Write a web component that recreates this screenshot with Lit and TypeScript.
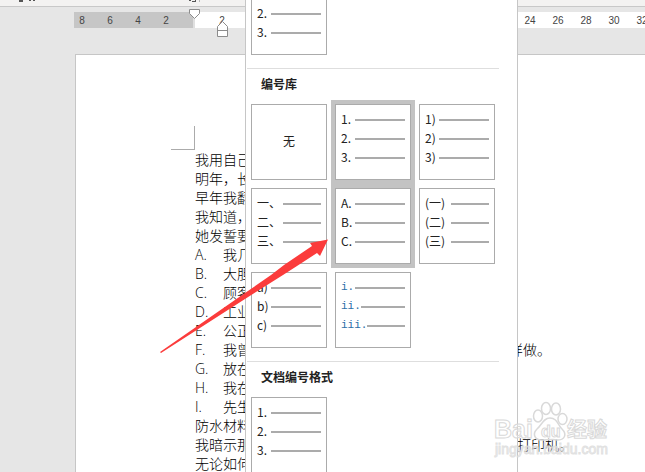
import { LitElement, html, css, nothing } from "lit";
import { customElement, property } from "lit/decorators.js";

interface Row { mark?: string; text: string; tail?: string; }
interface Choice { labels: string[]; sizes?: string[]; selected?: boolean; kind?: string; }

const rows: Row[] = [
  { text: "我用自己" },
  { text: "明年，长" },
  { text: "早年我翻" },
  { text: "我知道，" },
  { text: "她发誓要" },
  { mark: "A.", text: "我几" },
  { mark: "B.", text: "大胆" },
  { mark: "C.", text: "顾客" },
  { mark: "D.", text: "工业" },
  { mark: "E.", text: "公正" },
  { mark: "F.", text: "我曾", tail: "样做。" },
  { mark: "G.", text: "放在" },
  { mark: "H.", text: "我在" },
  { mark: "I.", text: "先生" },
  { text: "防水材料" },
  { text: "我暗示那", tail: "打印机。" },
  { text: "无论如何" },
];

const library: Choice[] = [
  { labels: [] },
  { labels: ["1.", "2.", "3."], selected: true },
  { labels: ["1)", "2)", "3)"] },
  { labels: ["一、", "二、", "三、"], sizes: ["l", "l", "l"] },
  { labels: ["A.", "B.", "C."], selected: true },
  { labels: ["(一)", "(二)", "(三)"], sizes: ["l", "l", "l"] },
  { labels: ["a)", "b)", "c)"] },
  { labels: ["i.", "ii.", "iii."], sizes: ["s", "m", "l"], kind: "roman" },
];
const digits: Choice = { labels: ["1.", "2.", "3."] };

@customElement("number-choice")
export class NumberChoice extends LitElement {
  @property({ attribute: false }) choice: Choice = digits;

  static styles = css`
    :host { display: block; }
    button {
      display: flex; flex-direction: column; box-sizing: border-box;
      width: 76px; height: 76px; padding: 5px 5px 0; margin: 0;
      border: 1px solid #ababab; border-radius: 0; background: #fff; color: #222;
      font: 12px/19px "Noto Sans CJK SC", sans-serif; text-align: left;
    }
    .selected { box-shadow: 0 0 0 4px #c3c3c3; }
    .none { align-items: center; justify-content: center; padding: 0 0 3px; }
    .line { display: flex; align-items: center; align-self: stretch; height: 19px; white-space: nowrap; }
    .label { flex: none; align-self: flex-start; width: 14px; line-height: 17px; }
    .m { width: 20px; }
    .l { width: 26px; }
    .roman { font-family: "Liberation Mono", monospace; font-size: 11px; color: #2d6fa8; }
    .roman .label { line-height: 19px; }
    .rule { flex: 1; height: 2px; background: #ababab; }
  `;

  render() {
    const { labels, sizes, selected, kind } = this.choice;
    if (!labels.length) return html`<button class="none">无</button>`;
    return html`<button class="${selected ? "selected" : ""} ${kind ?? ""}">
      ${labels.map((t, i) => html`<span class="line"><span class="label ${sizes?.[i] ?? ""}">${t}</span><span class="rule"></span></span>`)}
    </button>`;
  }
}

@customElement("app-root")
export class AppRoot extends LitElement {
  static styles = css`
    :host {
      display: block; position: relative; height: 100vh; overflow: hidden;
      background: #e6e6e6; color: #222;
      font: 14px/19px "Noto Sans CJK SC", sans-serif;
    }
    .ribbon { position: relative; height: 6px; background: #f3f2f1; border-bottom: 1px solid #c8c8c8; overflow: hidden; }
    .ribbon svg { display: block; }
    .ruler { display: flex; height: 16px; margin: 5px 0 0 74px; background: #fff; font: 10px/17px "Liberation Sans", sans-serif; color: #444; }
    .margin { display: flex; justify-content: flex-end; box-sizing: border-box; flex: none; width: 121px; padding-right: 13px; background: #c6c6c6; border-right: 2px solid #e0e0e0; }
    .scale { display: flex; flex: 1; min-width: 0; padding-left: 13px; overflow: hidden; }
    .tick { flex: none; width: 28px; text-align: center; }
    .skip { flex: none; width: 280px; }
    .markers { position: absolute; left: 188px; top: 8px; }
    .page { min-height: 417px; box-sizing: border-box; margin: 26px 0 0 75px; padding: 71px 0 0 95px; background: #fff; border: solid #c6c6c6; border-width: 1px 0 0 1px; }
    .corner { box-sizing: border-box; width: 24px; height: 24px; border: solid #ababab; border-width: 0 1px 1px 0; }
    .doc { padding-left: 24px; font-weight: 300; color: #000; }
    .row { display: flex; height: 19px; white-space: nowrap; }
    .mark { flex: none; width: 28px; font-family: "Open Sans", sans-serif; }
    .text { flex: none; width: 322px; }
    .mark + .text { width: 286px; }
    .menu {
      position: absolute; left: 245px; top: 0; bottom: 0; width: 273px; box-sizing: border-box;
      overflow: hidden; background: #fff; border: solid #c6c6c6; border-width: 0 1px;
    }
    .grid { display: grid; grid-template-columns: repeat(3, 76px); gap: 8px; padding: 0 5px; }
    .recent { margin-top: -21px; }
    h2 { margin: 13px 18px 0 1px; padding: 5px 0 0 14px; border-top: 1px solid #dedede; font: bold 12px/20px "Noto Sans CJK SC", sans-serif; height: 30px; color: #222; }
    .arrow { position: absolute; left: 160px; top: 236px; }
    .brand { position: absolute; left: 490px; top: 398px; }
    .brand text { font-family: "Liberation Sans", "Noto Sans CJK SC", sans-serif; }
  `;

  render() {
    return html`
      <header class="ribbon">
        <svg width="210" height="6"><path d="M19 0h4v2h-4zM29 0h2v1h-2zM33 0h2v1h-2zM189 0h2v1h-2zM192 1h4v1h-4zM195 0h1v2h-1z" fill="#555"/><path d="M199.500 0v2" stroke="#bbb"/></svg>
      </header>
      <div class="ruler">
        <div class="margin">${[8, 6, 4, 2].map((n) => html`<span class="tick">${n}</span>`)}</div>
        <div class="scale"><span class="tick">2</span><span class="skip"></span>${[24, 26, 28, 30, 32].map((n) => html`<span class="tick">${n}</span>`)}</div>
      </div>
      <svg class="markers" width="42" height="32" fill="#fff" stroke="#8c8c8c">
        <path d="M1.500 1.500h10v4l-5 5l-5-5z"/>
        <path d="M29.500 28.500v-10l5-5l5 5v10zM29.500 22.500h10"/>
      </svg>
      <main class="page">
        <div class="corner"></div>
        <div class="doc">
          ${rows.map((r) => html`<div class="row">
            ${r.mark ? html`<span class="mark">${r.mark}</span>` : nothing}<span class="text">${r.text}</span>${r.tail ? html`<span>${r.tail}</span>` : nothing}
          </div>`)}
        </div>
      </main>
      <section class="menu">
        <div class="grid recent"><number-choice .choice=${digits}></number-choice></div>
        <h2>编号库</h2>
        <div class="grid">${library.map((c) => html`<number-choice .choice=${c}></number-choice>`)}</div>
        <h2>文档编号格式</h2>
        <div class="grid"><number-choice .choice=${digits}></number-choice></div>
      </section>
      <svg class="arrow" width="170" height="120" viewBox="160 236 170 120" aria-hidden="true">
        <path d="M160 352L245 293L271 275L284 265L312 246L310 243L328 239.500L320 256L317 253L297 266L283 275L245 299L161 353Z" fill="#fb3b3b"/>
      </svg>
      <svg class="brand" width="125" height="64" viewBox="490 398 125 64">
        <g fill="#fff" fill-opacity=".4" stroke="#d9d9d9">
          <g stroke-width="1.500">
            <ellipse cx="538" cy="416" rx="4.500" ry="6"/>
            <ellipse cx="546" cy="408.500" rx="4.500" ry="6"/>
            <ellipse cx="556" cy="409" rx="4.500" ry="6"/>
            <ellipse cx="562.500" cy="419" rx="4.500" ry="5.500"/>
            <path d="M550 418C543 418 542 425 537 429C532 434 535 440 541 440C546 440 554 439 558 440C565 440 567 434 562 429C558 425 557 418 550 418Z"/>
          </g>
          <g font-weight="bold" stroke-width="1">
            <text x="494" y="438" font-size="25">Bai</text>
            <text x="541" y="437" font-size="16">du</text>
            <text x="567" y="437" font-size="20">经验</text>
          </g>
          <text x="495" y="454" font-size="14" stroke-width="1" stroke-opacity=".8">jingyan.baidu.com</text>
        </g>
      </svg>
    `;
  }
}
